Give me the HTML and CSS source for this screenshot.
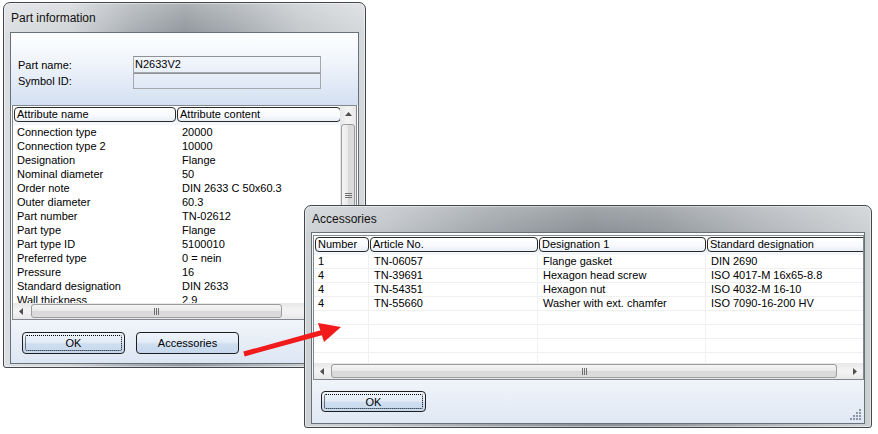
FILE: index.html
```html
<!DOCTYPE html>
<html lang="en">
<head>
    <meta charset="UTF-8">
    <meta name="viewport" content="width=device-width, initial-scale=1.0">
    <title>Part information</title>
    <link rel="stylesheet" href="styles.css">
</head>
<body>
<div class="desk">

    <!-- Part information dialog -->
    <div class="window part-win">
        <div class="titlebar">Part information</div>
        <div class="client">
            <div class="info">
                <div class="field"><span class="lbl">Part name:</span><span class="box">N2633V2</span></div>
                <div class="field"><span class="lbl">Symbol ID:</span><span class="box"></span></div>
            </div>

            <div class="listview attr-list">
                <div class="lv-main">
                    <div class="lv-head">
                        <div class="hcell w-name">Attribute name</div>
                        <div class="hcell w-content">Attribute content</div>
                    </div>
                    <div class="lv-row"><span class="cell c-name">Connection type</span><span class="cell c-content">20000</span></div>
                    <div class="lv-row"><span class="cell c-name">Connection type 2</span><span class="cell c-content">10000</span></div>
                    <div class="lv-row"><span class="cell c-name">Designation</span><span class="cell c-content">Flange</span></div>
                    <div class="lv-row"><span class="cell c-name">Nominal diameter</span><span class="cell c-content">50</span></div>
                    <div class="lv-row"><span class="cell c-name">Order note</span><span class="cell c-content">DIN 2633 C 50x60.3</span></div>
                    <div class="lv-row"><span class="cell c-name">Outer diameter</span><span class="cell c-content">60.3</span></div>
                    <div class="lv-row"><span class="cell c-name">Part number</span><span class="cell c-content">TN-02612</span></div>
                    <div class="lv-row"><span class="cell c-name">Part type</span><span class="cell c-content">Flange</span></div>
                    <div class="lv-row"><span class="cell c-name">Part type ID</span><span class="cell c-content">5100010</span></div>
                    <div class="lv-row"><span class="cell c-name">Preferred type</span><span class="cell c-content">0 = nein</span></div>
                    <div class="lv-row"><span class="cell c-name">Pressure</span><span class="cell c-content">16</span></div>
                    <div class="lv-row"><span class="cell c-name">Standard designation</span><span class="cell c-content">DIN 2633</span></div>
                    <div class="lv-row"><span class="cell c-name">Wall thickness</span><span class="cell c-content">2.9</span></div>
                </div>

                <div class="vscroll">
                    <div class="sb-arrow">
                        <svg width="7" height="4" viewBox="0 0 7 4"><polygon points="0,4 3.5,0 7,4" fill="#4f4f4f"/></svg>
                    </div>
                    <div class="sb-thumb v-thumb">
                        <svg width="7" height="7" viewBox="0 0 7 7"><path d="M0 1.5h7M0 3.5h7M0 5.5h7" stroke="#6f6f6f" stroke-width="1"/></svg>
                    </div>
                </div>

                <div class="hscroll part-hscroll">
                    <div class="sb-arrow">
                        <svg width="4" height="7" viewBox="0 0 4 7"><polygon points="4,0 0,3.5 4,7" fill="#4f4f4f"/></svg>
                    </div>
                    <div class="sb-thumb h-thumb">
                        <svg width="7" height="7" viewBox="0 0 7 7"><path d="M1.5 0v7M3.5 0v7M5.5 0v7" stroke="#6f6f6f" stroke-width="1"/></svg>
                    </div>
                </div>
                <div class="sb-corner"></div>
            </div>

            <div class="buttons part-buttons">
                <button class="btn focused">OK</button>
                <button class="btn">Accessories</button>
            </div>
        </div>
    </div>

    <!-- Accessories dialog -->
    <div class="window acc-win">
        <div class="titlebar">Accessories</div>
        <div class="client acc-client">
            <div class="listview acc-list">
                <div class="lv-main">
                    <div class="lv-head">
                        <div class="hcell w-num">Number</div>
                        <div class="hcell w-art">Article No.</div>
                        <div class="hcell w-des">Designation 1</div>
                        <div class="hcell w-std">Standard designation</div>
                    </div>
                    <div class="lv-row grid"><span class="cell c-num">1</span><span class="cell c-art">TN-06057</span><span class="cell c-des">Flange gasket</span><span class="cell c-std">DIN 2690</span></div>
                    <div class="lv-row grid"><span class="cell c-num">4</span><span class="cell c-art">TN-39691</span><span class="cell c-des">Hexagon head screw</span><span class="cell c-std">ISO 4017-M 16x65-8.8</span></div>
                    <div class="lv-row grid"><span class="cell c-num">4</span><span class="cell c-art">TN-54351</span><span class="cell c-des">Hexagon nut</span><span class="cell c-std">ISO 4032-M 16-10</span></div>
                    <div class="lv-row grid"><span class="cell c-num">4</span><span class="cell c-art">TN-55660</span><span class="cell c-des">Washer with ext. chamfer</span><span class="cell c-std">ISO 7090-16-200 HV</span></div>
                    <div class="lv-row grid"><span class="cell c-num"></span><span class="cell c-art"></span><span class="cell c-des"></span><span class="cell c-std"></span></div>
                    <div class="lv-row grid"><span class="cell c-num"></span><span class="cell c-art"></span><span class="cell c-des"></span><span class="cell c-std"></span></div>
                    <div class="lv-row grid"><span class="cell c-num"></span><span class="cell c-art"></span><span class="cell c-des"></span><span class="cell c-std"></span></div>
                    <div class="lv-row grid"><span class="cell c-num"></span><span class="cell c-art"></span><span class="cell c-des"></span><span class="cell c-std"></span></div>
                </div>

                <div class="hscroll acc-hscroll">
                    <div class="sb-arrow">
                        <svg width="4" height="7" viewBox="0 0 4 7"><polygon points="4,0 0,3.5 4,7" fill="#4f4f4f"/></svg>
                    </div>
                    <div class="sb-thumb h-thumb">
                        <svg width="7" height="7" viewBox="0 0 7 7"><path d="M1.5 0v7M3.5 0v7M5.5 0v7" stroke="#6f6f6f" stroke-width="1"/></svg>
                    </div>
                    <div class="sb-track"></div>
                    <div class="sb-arrow">
                        <svg width="4" height="7" viewBox="0 0 4 7"><polygon points="0,0 4,3.5 0,7" fill="#4f4f4f"/></svg>
                    </div>
                </div>
            </div>

            <div class="buttons acc-buttons">
                <button class="btn focused">OK</button>
            </div>

            <svg class="grip" width="12" height="12" viewBox="0 0 12 12">
                <rect x="9" y="0" width="2" height="2" fill="#8a96a6"/>
                <rect x="6" y="3" width="2" height="2" fill="#8a96a6"/>
                <rect x="9" y="3" width="2" height="2" fill="#8a96a6"/>
                <rect x="3" y="6" width="2" height="2" fill="#8a96a6"/>
                <rect x="6" y="6" width="2" height="2" fill="#8a96a6"/>
                <rect x="9" y="6" width="2" height="2" fill="#8a96a6"/>
                <rect x="0" y="9" width="2" height="2" fill="#8a96a6"/>
                <rect x="3" y="9" width="2" height="2" fill="#8a96a6"/>
                <rect x="6" y="9" width="2" height="2" fill="#8a96a6"/>
                <rect x="9" y="9" width="2" height="2" fill="#8a96a6"/>
            </svg>
        </div>
    </div>

    <!-- annotation arrow -->
    <svg class="pointer" width="878" height="434" viewBox="0 0 878 434">
        <line x1="244" y1="354" x2="324" y2="332" stroke="#f21b1b" stroke-width="5"/>
        <polygon points="341,327 324,342 318,323" fill="#f21b1b"/>
    </svg>
</div>
</body>
</html>
```

FILE: styles.css
```css
/* General */
* {
    box-sizing: border-box;
}

html, body {
    margin: 0;
    padding: 0;
    background: #fff;
}

body {
    font-family: "Liberation Sans", Arial, sans-serif;
    font-size: 11px;
    color: #000;
}

.desk {
    position: relative;
    width: 878px;
    height: 434px;
    overflow: hidden;
    background: #fff;
}

/* Window frame (Win7 basic look) */
.window {
    position: absolute;
    display: flex;
    flex-direction: column;
    padding: 0 6px 3px 6px;
    border: 1px solid #41474d;
    border-radius: 7px 7px 3px 3px;
    box-shadow: inset 0 0 0 1px rgba(255, 255, 255, 0.45);
}

.part-win {
    left: 3px;
    top: 2px;
    width: 363px;
    height: 366px;
    background:
        linear-gradient(to bottom, rgba(255, 255, 255, 0.25), rgba(255, 255, 255, 0) 30px),
        linear-gradient(to right, #dcdfe2 0%, #d2d5d8 18%, #a9aeb3 36%, #92989d 50%, #a6abb0 64%, #c5c9cc 82%, #d6d9dc 100%);
}

.acc-win {
    left: 304px;
    top: 205px;
    width: 568px;
    height: 223px;
    z-index: 2;
    background:
        linear-gradient(to bottom, rgba(255, 255, 255, 0.2), rgba(255, 255, 255, 0) 28px),
        linear-gradient(to right, #cfd3d6 0%, #c1c5c9 14%, #a1a6ab 32%, #8a9095 50%, #92979c 62%, #b4b8bc 82%, #cdd0d3 100%);
}

.titlebar {
    display: flex;
    align-items: center;
    padding-left: 1px;
    font-size: 12px;
    color: #111;
}

.part-win .titlebar {
    height: 29px;
}

.acc-win .titlebar {
    height: 26px;
}

.client {
    position: relative;
    flex: 1;
    display: flex;
    flex-direction: column;
    border: 1px solid #687078;
    background: #fff;
}

/* Part info header fields */
.info {
    height: 72px;
    padding: 23px 0 0 7px;
    background: linear-gradient(to bottom, #fdfeff 0%, #eef3fa 45%, #d3e0f2 100%);
}

.field {
    display: flex;
    align-items: center;
    height: 17px;
}

.field + .field {
    height: 16px;
}

.lbl {
    width: 115px;
}

.box {
    width: 188px;
    height: 100%;
    padding-left: 1px;
    line-height: 15px;
    border: 1px solid #a4a8ad;
    border-top-color: #8e9297;
}

/* List view */
.listview {
    display: grid;
    border: 1px solid #828790;
    background: #fff;
}

.attr-list {
    margin-left: 1px;
    width: 345px;
    height: 215px;
    grid-template-columns: 1fr 16px;
    grid-template-rows: 1fr 16px;
}

.acc-list {
    margin: 2px 0 0 1px;
    width: 551px;
    height: 145px;
    grid-template-columns: 1fr;
    grid-template-rows: 1fr 16px;
}

.lv-main {
    overflow: hidden;
}

.lv-head {
    display: flex;
    height: 19px;
    padding: 1px 0 0 1px;
    background: linear-gradient(to bottom, #ffffff, #f3f6fa);
}

.hcell {
    flex: none;
    height: 15px;
    margin-right: 1px;
    padding-left: 2px;
    line-height: 13px;
    white-space: nowrap;
    overflow: hidden;
    border: 1px solid #2a2a2a;
    border-radius: 4px;
    background: linear-gradient(to bottom, #ffffff 0%, #f7f9fc 60%, #e9eff7 100%);
}

.w-name { width: 162px; }
.w-content { width: 164px; }
.w-num { width: 54px; }
.w-art { width: 168px; }
.w-des { width: 167px; }
.w-std { width: 160px; }

.lv-row {
    display: flex;
    height: 14px;
    line-height: 14px;
    white-space: nowrap;
}

.cell {
    flex: none;
    overflow: hidden;
}

.c-name { width: 164px; padding-left: 4px; }
.c-content { width: 160px; padding-left: 5px; }

.lv-row.grid {
    border-bottom: 1px solid #f0f0f0;
    line-height: 13px;
}

.lv-row.grid .cell {
    border-right: 1px solid #f0f0f0;
    padding-left: 5px;
}

.lv-row.grid .c-num { width: 55px; padding-left: 4px; }
.lv-row.grid .c-art { width: 169px; }
.lv-row.grid .c-des { width: 168px; }
.lv-row.grid .c-std { width: 157px; border-right: none; }

/* Scrollbars */
.vscroll {
    display: flex;
    flex-direction: column;
    overflow: hidden;
    background: linear-gradient(to right, #e7e7e7, #f2f2f2 40%, #f2f2f2 60%, #e7e7e7);
}

.hscroll {
    display: flex;
    overflow: hidden;
    background: linear-gradient(to bottom, #e7e7e7, #f2f2f2 40%, #f2f2f2 60%, #e7e7e7);
}

.sb-arrow {
    flex: none;
    width: 16px;
    height: 16px;
    display: flex;
    align-items: center;
    justify-content: center;
}

.sb-thumb {
    flex: none;
    display: flex;
    align-items: center;
    justify-content: center;
    border: 1px solid #9c9c9c;
    border-radius: 3px;
}

.v-thumb {
    margin: 2px 1px 0 1px;
    height: 142px;
    background: linear-gradient(to right, #f5f5f5, #e9e9e9 50%, #d9d9d9 51%, #dcdcdc);
}

.h-thumb {
    margin: 1px 0;
    background: linear-gradient(to bottom, #f5f5f5, #e9e9e9 50%, #d9d9d9 51%, #dcdcdc);
}

.part-hscroll .h-thumb {
    margin-left: 2px;
    width: 251px;
}

.acc-hscroll .h-thumb {
    margin-left: 1px;
    width: 506px;
}

.sb-track {
    flex: 1;
}

.sb-corner {
    background: #f0f0f0;
}

/* Button strips */
.buttons {
    flex: 1;
    display: flex;
    gap: 11px;
}

.part-buttons {
    padding: 12px 0 0 11px;
    background: linear-gradient(to bottom, #f1f5fa, #dce6f3);
}

.acc-client {
    background: linear-gradient(to bottom, #fbfcfe, #f1f5fa 10px);
}

.acc-buttons {
    padding: 11px 0 0 9px;
    background: linear-gradient(to bottom, #f0f4fa, #dfe8f4);
}

.btn {
    position: relative;
    width: 103px;
    height: 22px;
    padding: 0;
    font-family: "Liberation Sans", Arial, sans-serif;
    font-size: 11px;
    color: #000;
    border: 1px solid #1e1e1e;
    border-radius: 4px;
    background: linear-gradient(to bottom, #eef4fb 0%, #e3ecf7 45%, #cfdef0 55%, #c6d8ee 100%);
}

.acc-buttons .btn {
    width: 105px;
    height: 21px;
}

.btn.focused::after {
    content: "";
    position: absolute;
    inset: 2px;
    border: 1px dotted #000;
    border-radius: 2px;
}

.grip {
    position: absolute;
    right: 2px;
    bottom: 2px;
}

/* Annotation arrow */
.pointer {
    position: absolute;
    left: 0;
    top: 0;
    z-index: 5;
    pointer-events: none;
}
```
